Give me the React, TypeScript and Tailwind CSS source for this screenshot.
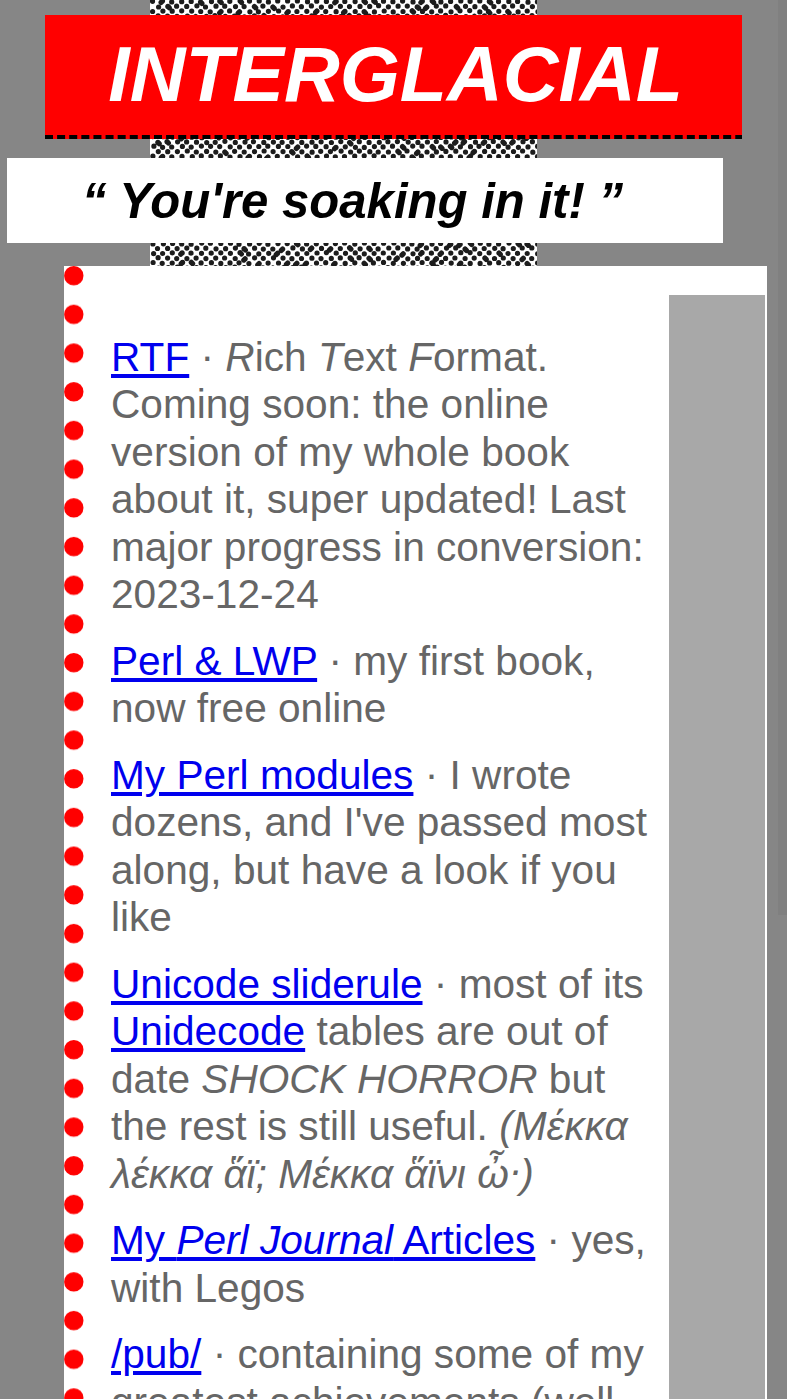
import type { ReactNode } from "react";

function Link({ children }: { children: ReactNode }) {
  return (
    <a href="#" className="text-[#0000ee] underline decoration-[4px] underline-offset-[3px]">
      {children}
    </a>
  );
}

function Separator() {
  return <span className="relative -top-[1px]">·</span>;
}

// Deterministic jitter in the range -1..1 for the halftone grid.
function jitter(a: number, b: number) {
  const v = Math.sin(a * 12.9898 + b * 78.233) * 43758.5453;
  return (v - Math.floor(v)) * 2 - 1;
}

const halftone: string[] = [];
for (let row = 0; row < 57; row++) {
  for (let col = 0; col < 42; col++) {
    const x = col * 9.6 + (row % 2 ? 8 : 3.2) + jitter(row, col) * 0.7;
    const y = row * 4.84 + 1.6 + jitter(col + 50, row) * 0.7;
    halftone.push(`M${x.toFixed(1)} ${y.toFixed(1)}h.01`);
    if (jitter(row + 9, col + 77) > 0.6) {
      const dir = jitter(row + 3, col + 5) > 0 ? 1 : -1;
      halftone.push(`M${x.toFixed(1)} ${y.toFixed(1)}l${(dir * 1.3).toFixed(1)} 1.3`);
    }
  }
}

function Halftone() {
  return (
    <svg className="absolute left-[150px] top-0 h-[270px] w-[387px]" aria-hidden="true">
      <rect width="387" height="270" fill="#fff" />
      <path d={halftone.join("")} stroke="#1c1c1c" strokeWidth="5.2" strokeLinecap="round" fill="none" />
    </svg>
  );
}

function Dots() {
  return (
    <svg className="h-full w-[20px] shrink-0" aria-hidden="true">
      <defs>
        <pattern id="dots" width="20" height="38.7" patternUnits="userSpaceOnUse">
          <circle cx="9.8" cy="9.7" r="9.7" fill="#f00" />
        </pattern>
      </defs>
      <rect width="20" height="1140" fill="url(#dots)" />
    </svg>
  );
}

export default function App() {
  return (
    <div className="relative h-[1399px] w-[787px] overflow-hidden bg-[#868686] font-['Liberation_Sans',Arial,sans-serif]">
      <Halftone />
      <div className="absolute right-0 top-0 h-[915px] w-[9px] bg-[#808080]" />
      <div className="relative flex h-full flex-col pt-[15px]">
        <header className="ml-[45px] h-[124px] w-[697px] shrink-0 bg-[#f00]">
          <h1 className="h-[120px] pl-[4px] text-center text-[77.2px] leading-[118px] font-bold text-white italic">INTERGLACIAL</h1>
          <svg className="block h-[4px] w-[697px]" aria-hidden="true">
            <line x1="0" y1="2" x2="697" y2="2" stroke="#000" strokeWidth="4" strokeDasharray="8 4.11" />
          </svg>
        </header>
        <h2 className="mt-[19px] ml-[7px] h-[85px] w-[716px] shrink-0 bg-white pr-[25px] text-center text-[49.1px] leading-[86px] font-bold whitespace-nowrap text-black italic">
          “ You're soaking in it! ”
        </h2>
        <main className="mt-[23px] ml-[64px] flex h-[1133px] w-[703px] shrink-0 bg-white">
          <Dots />
          <ul className="ml-[27px] flex w-[541px] shrink-0 flex-col gap-[19.35px] pt-[68px] text-[40.62px] leading-[47.4px] text-[#666]">
            <li>
              <Link>RTF</Link> <Separator /> <i>R</i>ich <i>T</i>ext <i>F</i>ormat. Coming soon: the online version of my whole book
              about it, super updated! Last major progress in conversion: 2023-12-24
            </li>
            <li>
              <Link>Perl &amp; LWP</Link> <Separator /> my first book, now free online
            </li>
            <li>
              <Link>My Perl modules</Link> <Separator /> I wrote dozens, and I've passed most along, but have a look if you like
            </li>
            <li>
              <Link>Unicode sliderule</Link> <Separator /> most of its <Link>Unidecode</Link> tables are out of date{" "}
              <i>SHOCK HORROR</i> but the rest is still useful.{" "}
              <i>
                (Μέκκα λέκκα ἅϊ; Μέκκα ἅϊνι ὦ<span className="relative -top-[4px] -mr-[2px]">·</span>)
              </i>
            </li>
            <li>
              <Link>
                My <i>Perl Journal</i> Articles
              </Link>{" "}
              <Separator /> yes, with Legos
            </li>
            <li>
              <Link>/pub/</Link> <Separator /> containing some of my greatest achievements (well
            </li>
          </ul>
          <aside className="mt-[29px] ml-[17px] w-[96px] shrink-0 bg-[#a8a8a8]" />
        </main>
      </div>
    </div>
  );
}
